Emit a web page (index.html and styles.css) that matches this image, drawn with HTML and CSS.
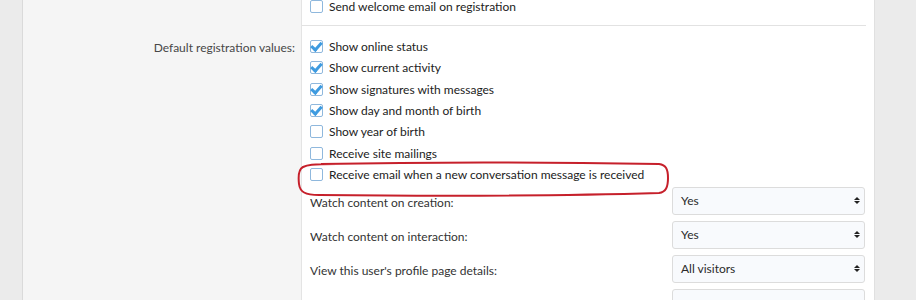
FILE: index.html
```html
<!DOCTYPE html>
<html lang="en">
<head>
  <meta charset="UTF-8">
  <title>Registration options</title>
  <link rel="stylesheet" href="styles.css">
</head>
<body>
  <div class="page">
    <!-- Welcome email row -->
    <div class="form-row first">
      <div class="row-label"></div>
      <div class="row-input sep">
        <label class="check"><span class="box"></span>Send welcome email on registration</label>
      </div>
    </div>

    <!-- Default registration values -->
    <div class="form-row">
      <div class="row-label"><span>Default registration values:</span></div>
      <div class="row-input defaults">
        <label class="check"><span class="box on"></span>Show online status</label>
        <label class="check"><span class="box on"></span>Show current activity</label>
        <label class="check"><span class="box on"></span>Show signatures with messages</label>
        <label class="check"><span class="box on"></span>Show day and month of birth</label>
        <label class="check"><span class="box"></span>Show year of birth</label>
        <label class="check"><span class="box"></span>Receive site mailings</label>
        <label class="check"><span class="box"></span>Receive email when a new conversation message is received</label>

        <div class="sub-row">
          <span>Watch content on creation:</span>
          <div class="select">Yes<i class="arrows"></i></div>
        </div>
        <div class="sub-row">
          <span>Watch content on interaction:</span>
          <div class="select">Yes<i class="arrows"></i></div>
        </div>
        <div class="sub-row">
          <span>View this user's profile page details:</span>
          <div class="select">All visitors<i class="arrows"></i></div>
        </div>
        <div class="sub-row">
          <span></span>
          <div class="select"></div>
        </div>
      </div>
    </div>

    <!-- hand-drawn highlight -->
    <svg class="mark" width="376" height="40" viewBox="0 0 376 40">
      <path d="M24 3 C120 1 250 1 362 3 C369 4 371 8 371 17 C371 26 369 31 362 32 C260 35 120 35 22 34 C8 34 3 31 2 23 C1 14 2 8 6 6 C10 4 14 3 40 3"
            fill="none" stroke="#c6202b" stroke-width="2"/>
    </svg>
  </div>
</body>
</html>
```

FILE: styles.css
```css
body {
  margin: 0;
  background: #ebebeb;
  font-family: Lato, "Open Sans", sans-serif;
  font-size: 12px;
  color: #222;
  overflow: hidden;
}

.page {
  position: relative;
  margin-left: 22px;
  margin-top: -4.5px;
  width: 851px;
  background: #fff;
  border-left: 1px solid #dadada;
  border-right: 1px solid #e0e0e0;
  min-height: 320px;
}

.form-row {
  display: grid;
  grid-template-columns: 279px 1fr;
}

.row-label {
  background: #f5f5f5;
  border-right: 1px solid #e4e4e4;
  text-align: right;
  padding: 11px 6px 0 0;
  color: #474747;
  line-height: 21px;
}

.row-input {
  padding: 0 8px;
}

.row-input.sep {
  padding-bottom: 8px;
  margin-right: 8px;
  border-bottom: 1px solid #e2e2e2;
}

.first .row-label {
  padding-top: 0;
}

.defaults {
  padding-top: 10px;
  min-height: 300px;
}

.check {
  display: flex;
  align-items: center;
  height: 21.33px;
}

.box {
  position: relative;
  width: 11px;
  height: 11px;
  border: 1px solid #8fb8dd;
  border-radius: 2px;
  background: #fff;
  margin-right: 6px;
  flex-shrink: 0;
}

.box.on::after {
  content: "";
  position: absolute;
  left: 2px;
  top: -1px;
  width: 4px;
  height: 8px;
  border: solid #3e9be0;
  border-width: 0 3px 3px 0;
  transform: rotate(42deg);
}

.sub-row {
  display: grid;
  grid-template-columns: 1fr 193px;
  align-items: center;
  margin-right: 1px;
  color: #333;
}

.sub-row:first-of-type {
  margin-top: 2px;
}

.sub-row + .sub-row {
  margin-top: 6px;
}

.sub-row span {
  padding-top: 3px;
}

.select {
  position: relative;
  height: 26px;
  line-height: 26px;
  padding: 0 8px;
  border: 1px solid #dcdcdc;
  border-radius: 3px;
  background: #f8fafd;
  font-size: 12px;
  color: #2a2a2a;
}

.arrows {
  position: absolute;
  right: 4px;
  top: 9px;
  width: 0;
  height: 0;
  border-left: 3px solid transparent;
  border-right: 3px solid transparent;
  border-bottom: 3px solid #222;
}

.arrows::after {
  content: "";
  position: absolute;
  left: -3px;
  top: 4px;
  border-left: 3px solid transparent;
  border-right: 3px solid transparent;
  border-top: 3px solid #222;
}

.mark {
  position: absolute;
  left: 274px;
  top: 165px;
}
```
